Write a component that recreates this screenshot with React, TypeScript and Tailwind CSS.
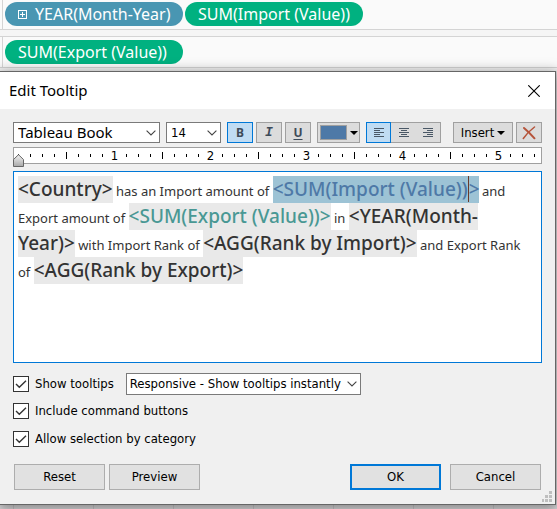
import React, { useState } from "react";

const uiFont = "font-['Noto_Sans','Open_Sans',sans-serif]";
const controlFont = "font-['DejaVu_Sans_Condensed','Noto_Sans',sans-serif]";

function Chevron({ className }: { className: string }) {
  return (
    <svg
      aria-hidden="true"
      viewBox="0 0 10 6"
      className={`pointer-events-none absolute top-1/2 h-1.5 w-2.5 -translate-y-1/2 ${className}`}
      fill="none"
      stroke="#444"
      strokeWidth="1.1"
    >
      <path d="M0.6 0.6 5 5 9.4 0.6" />
    </svg>
  );
}

function Caret() {
  return (
    <svg aria-hidden="true" viewBox="0 0 8 4" className="h-1 w-2 shrink-0" fill="#000">
      <path d="M0 0h8L4 4z" />
    </svg>
  );
}

function Pill({ tone, children }: { tone: string; children: React.ReactNode }) {
  return (
    <button
      type="button"
      className={`flex h-6 w-[178px] items-center gap-2 rounded-full pl-[13px] text-base whitespace-nowrap text-white ${tone}`}
    >
      {children}
    </button>
  );
}

function AlignIcon({ kind }: { kind: "left" | "center" | "right" }) {
  const short = { left: 0, center: 2, right: 4 }[kind];
  return (
    <svg aria-hidden="true" viewBox="0 0 10 10" className="h-2.5 w-2.5" shapeRendering="crispEdges" fill="#4a5866">
      <rect x="0" y="0" width="10" height="1" />
      <rect x={short} y="2" width="6" height="1" />
      <rect x="0" y="4" width="10" height="1" />
      <rect x={short} y="6" width="6" height="1" />
      <rect x="0" y="8" width="10" height="1" />
    </svg>
  );
}

const toolBase = "flex h-[21px] w-[26px] items-center justify-center border text-[#3e4b59]";
const toolOff = "border-[#a0a0a0] bg-[#dcdcdc]";
const toolOn = "border-[#0078d7] bg-[#c0dcf3]";

function Ruler() {
  return (
    <div className="relative h-[17px] border border-[#a0a0a0] bg-white">
      <div className="flex h-full items-center overflow-hidden pl-1 leading-none">
        {Array.from({ length: 44 }, (_, i) => (
          <span key={i} className="flex w-3 shrink-0 items-center">
            {i > 0 && i % 8 === 0 ? (
              <span className="flex w-px justify-center">
                <span>{i / 8}</span>
              </span>
            ) : (
              <span className={`w-px bg-black ${i % 8 === 4 ? "h-[7px]" : "h-[3px]"}`} />
            )}
          </span>
        ))}
      </div>
      <svg aria-hidden="true" viewBox="0 0 11 13" className="absolute top-1.5 -left-px h-[13px] w-[11px]">
        <defs>
          <linearGradient id="grip" x1="0" x2="0" y1="0" y2="1">
            <stop offset="0" stopColor="#f4f4f4" />
            <stop offset="1" stopColor="#a8a8a8" />
          </linearGradient>
        </defs>
        <path d="M5.5 0.7 10.5 5.5v7H0.5v-7z" fill="url(#grip)" stroke="#666" />
      </svg>
    </div>
  );
}

function Field({ children, tone = "bg-[#e9e9e9] text-[#333]" }: { children: React.ReactNode; tone?: string }) {
  return <span className={`pb-px text-[19px] leading-[27px] font-medium ${tone}`}>{children}</span>;
}

function Check({ id, label }: { id: string; label: string }) {
  const [on, setOn] = useState(true);
  return (
    <div className="flex items-center gap-1.5">
      <span className="relative block h-4 w-4">
        <input
          id={id}
          type="checkbox"
          checked={on}
          onChange={(e) => setOn(e.target.checked)}
          className="block h-4 w-4 appearance-none border border-[#333] bg-white"
        />
        {on && (
          <svg
            aria-hidden="true"
            viewBox="0 0 16 16"
            className="pointer-events-none absolute inset-0"
            fill="none"
            stroke="#333"
            strokeWidth="1.4"
          >
            <path d="M3 8 6.3 11.3 13 4.7" />
          </svg>
        )}
      </span>
      <label htmlFor={id} className="leading-4">
        {label}
      </label>
    </div>
  );
}

const action = "h-[26px] w-[91px] bg-[#e1e1e1]";

export default function App() {
  const [bold, setBold] = useState(true);
  const [italic, setItalic] = useState(false);
  const [underline, setUnderline] = useState(false);
  const [align, setAlign] = useState<"left" | "center" | "right">("left");

  return (
    <div className={`flex min-h-screen flex-col overflow-hidden bg-[#e4e2e4] text-black ${uiFont}`}>
      <div className="bg-[#f5f5f5] pb-[3px]">
        <div className="border-b border-[#d4d4d4] bg-[#fafafa] pl-0.5">
          <div className="flex h-[29px] gap-0.5 border-l border-[#d4d4d4] pt-0.5 pl-0.5">
            <Pill tone="bg-[#4996b2]">
              <svg aria-hidden="true" viewBox="0 0 9 9" className="h-[9px] w-[9px]" fill="none" stroke="#fff" shapeRendering="crispEdges">
                <path d="M0.5 0.5h8v8h-8zM2 4.5h5M4.5 2v5" />
              </svg>
              YEAR(Month-Year)
            </Pill>
            <Pill tone="bg-[#00b180]">SUM(Import (Value))</Pill>
          </div>
        </div>
        <div className="mt-1.5 border-y border-[#d4d4d4] bg-[#fafafa] pl-0.5">
          <div className="flex h-[30px] border-l border-[#d4d4d4] pt-[3px] pl-0.5">
            <Pill tone="bg-[#00b180]">SUM(Export (Value))</Pill>
          </div>
        </div>
      </div>

      <section
        role="dialog"
        aria-labelledby="title"
        className={`relative mr-px border-t border-r border-b border-[#666] bg-[#f0f0f0] text-[13px] shadow-[0_3px_12px_2px_rgba(0,0,0,0.4)] ${controlFont}`}
      >
        <header className="flex h-[37px] items-center justify-between bg-white pr-[15px] pl-[9px]">
          <h1 id="title" className={`text-[15px] ${uiFont}`}>
            Edit Tooltip
          </h1>
          <button type="button" aria-label="Close">
            <svg aria-hidden="true" viewBox="0 0 12 12" className="h-3 w-3" stroke="#000" strokeWidth="1.1">
              <path d="M0.3 0.3 11.7 11.7M11.7 0.3 0.3 11.7" />
            </svg>
          </button>
        </header>

        <div className="px-[13px] pt-[13px] pb-3.5">
          <div className="flex items-center">
            <span className="relative w-[147px]">
              <select
                aria-label="Font"
                className={`block h-[21px] w-full appearance-none border border-[#7a7a7a] bg-white pl-1 text-[15px] leading-[19px] ${uiFont}`}
              >
                <option>Tableau Book</option>
              </select>
              <Chevron className="right-1" />
            </span>
            <span className="relative ml-1.5 w-[55px]">
              <select aria-label="Font size" className="block h-[21px] w-full appearance-none border border-[#7a7a7a] bg-white pl-1 leading-[19px]">
                <option>14</option>
              </select>
              <Chevron className="right-1" />
            </span>
            <div className="ml-1.5 flex gap-[3px]">
              <button type="button" aria-label="Bold" aria-pressed={bold} onClick={() => setBold(!bold)} className={`${toolBase} ${bold ? toolOn : toolOff}`}>
                <b className={`text-xs ${uiFont}`}>B</b>
              </button>
              <button type="button" aria-label="Italic" aria-pressed={italic} onClick={() => setItalic(!italic)} className={`${toolBase} ${italic ? toolOn : toolOff}`}>
                <i className="font-['Liberation_Mono',monospace] font-bold">I</i>
              </button>
              <button type="button" aria-label="Underline" aria-pressed={underline} onClick={() => setUnderline(!underline)} className={`${toolBase} ${underline ? toolOn : toolOff}`}>
                <span className={`text-xs font-bold underline underline-offset-2 ${uiFont}`}>U</span>
              </button>
            </div>
            <button type="button" aria-label="Text color" className={`ml-1.5 flex h-[21px] w-[43px] items-center justify-between border pr-px pl-0.5 ${toolOff}`}>
              <span className="h-[15px] w-[27px] border border-[#a0a0a0] bg-[#4e79a7]" />
              <Caret />
            </button>
            <div className="ml-1.5 flex">
              {(["left", "center", "right"] as const).map((kind) => (
                <button
                  key={kind}
                  type="button"
                  aria-label={`Align ${kind}`}
                  aria-pressed={align === kind}
                  onClick={() => setAlign(kind)}
                  className={`flex h-[21px] w-[25px] items-center justify-center ${
                    align === kind ? `border ${toolOn}` : "border-y border-[#a0a0a0] bg-[#dcdcdc] last:border-r"
                  }`}
                >
                  <AlignIcon kind={kind} />
                </button>
              ))}
            </div>
            <button type="button" className={`ml-auto flex h-[21px] w-[60px] items-center justify-center gap-[3px] border ${toolOff}`}>
              Insert
              <Caret />
            </button>
            <button type="button" aria-label="Clear" className={`ml-[3px] ${toolBase} ${toolOff}`}>
              <svg aria-hidden="true" viewBox="0 0 14 14" className="h-3.5 w-3.5" fill="none" stroke="#b5533a" strokeLinecap="round">
                <path d="M2 2C5 4.5 9.5 9 12.5 12.3" strokeWidth="2" />
                <path d="M12.5 1C8.5 4 4 8.5 1.3 12.5" strokeWidth="1.5" />
              </svg>
            </button>
          </div>

          <div className="mt-1">
            <Ruler />
          </div>

          <div
            role="textbox"
            aria-label="Tooltip text"
            aria-multiline="true"
            contentEditable
            suppressContentEditableWarning
            spellCheck={false}
            className={`mt-[7px] h-48 border border-[#0078d7] bg-white pt-1 pr-3 pl-1 leading-5 text-[#333] outline-none ${uiFont}`}
          >
            <Field>&lt;Country&gt;</Field> has an Import amount of{" "}
            <Field tone="bg-[#9dc3d5] text-[#4e79a7]">
              &lt;SUM(Import (Value))
              <span className="-mr-px border-l border-[#6b3a2a]">&gt;</span>
            </Field>{" "}
            and Export amount of <Field tone="bg-[#e9e9e9] text-[#499894]">&lt;SUM(Export (Value))&gt;</Field> in{" "}
            <Field>
              &lt;YEAR(Month-
              <br />
              Year)&gt;
            </Field>{" "}
            with Import Rank of <Field>&lt;AGG(Rank by Import)&gt;</Field> and Export Rank of{" "}
            <Field>&lt;AGG(Rank by Export)&gt;</Field>
          </div>

          <div className="mt-2.5 flex items-center gap-3">
            <Check id="show" label="Show tooltips" />
            <span className="relative w-[235px]">
              <select aria-label="Tooltip behavior" className="block h-[22px] w-full appearance-none border border-[#7a7a7a] bg-white pl-[3px] leading-5">
                <option>Responsive - Show tooltips instantly</option>
              </select>
              <Chevron className="right-1" />
            </span>
          </div>
          <div className="mt-2 flex flex-col gap-3">
            <Check id="commands" label="Include command buttons" />
            <Check id="category" label="Allow selection by category" />
          </div>

          <footer className="mt-[17px] flex px-px">
            <button type="button" className={`${action} border border-[#adadad]`}>Reset</button>
            <button type="button" className={`${action} ml-1 border border-[#adadad]`}>Preview</button>
            <button type="button" className={`${action} ml-auto border-2 border-[#0078d7]`}>OK</button>
            <button type="button" className={`${action} ml-[9px] border border-[#adadad]`}>Cancel</button>
          </footer>
        </div>
        <svg aria-hidden="true" viewBox="0 0 10 11" className="absolute right-[3px] bottom-0.5 h-[11px] w-2.5" fill="#bfbfbf" shapeRendering="crispEdges">
          <path d="M7 0h3v3H7zM7 4h3v3H7zM3 4h3v3H3zM7 8h3v3H7zM3 8h3v3H3zM0 8h2v3H0z" />
        </svg>
      </section>
      <div className="flex flex-1 overflow-hidden pl-[13px]" aria-hidden="true">
        {Array.from({ length: 7 }, (_, i) => (
          <span key={i} className="w-20 shrink-0 border-l border-[#d0ced0]" />
        ))}
      </div>
    </div>
  );
}
